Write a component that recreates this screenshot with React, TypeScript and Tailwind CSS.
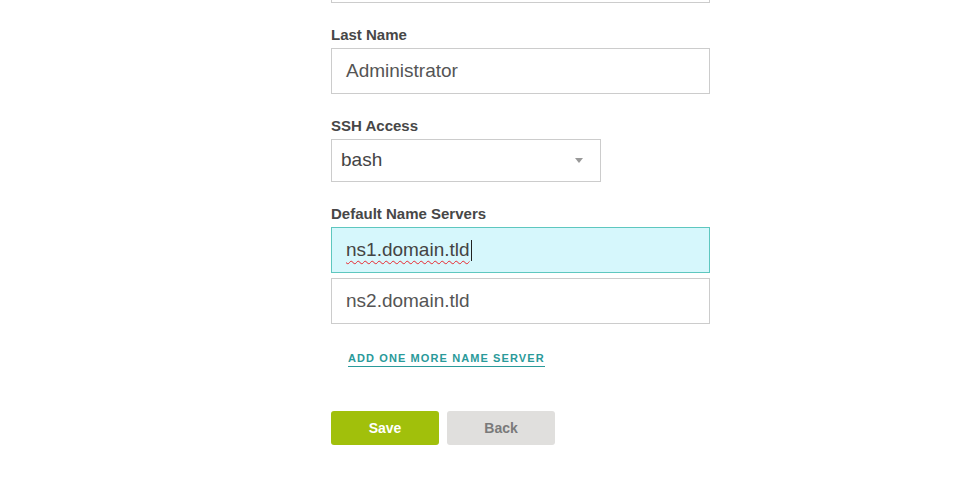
export default function App() {
  return (
    <main className="min-h-[493px] w-full overflow-hidden bg-white pl-[331px] font-['Liberation_Sans',Arial,sans-serif]">
      <div className="flex w-[379px] flex-col">
        <div className="-mt-[43px] h-[46px] border border-[#cccccc] bg-white" />

        <label className="mt-[24px] mb-[5px] text-[15px] leading-[16px] font-bold text-[#474747]">Last Name</label>
        <div className="flex h-[46px] items-center border border-[#cccccc] bg-white pl-[14px] text-[19px] text-[#555555]">
          Administrator
        </div>

        <label className="mt-[24px] mb-[5px] text-[15px] leading-[16px] font-bold text-[#474747]">SSH Access</label>
        <div className="flex h-[43px] w-[270px] items-center justify-between border border-[#cccccc] bg-white pr-[17px] pl-[9px] text-[19px] text-[#444444]">
          <span>bash</span>
          <span className="h-0 w-0 border-x-[4.5px] border-t-[5px] border-x-transparent border-t-[#999999]" />
        </div>

        <label className="mt-[24px] mb-[5px] text-[15px] leading-[16px] font-bold text-[#474747]">Default Name Servers</label>
        <div className="flex flex-col gap-[5px]">
          <div className="flex h-[46px] items-center border border-[#5ec7bf] bg-[#d6f7fc] pl-[14px] text-[19px] text-[#444444]">
            <span className="underline decoration-[#e8262e] decoration-wavy decoration-1 underline-offset-[4px]">ns1.domain.tld</span>
            <span className="ml-px h-[21px] w-px bg-[#222222]" />
          </div>
          <div className="flex h-[46px] items-center border border-[#cccccc] bg-white pl-[14px] text-[19px] text-[#555555]">
            ns2.domain.tld
          </div>
        </div>

        <div className="mt-[21px] pl-[17px]">
          <a className="inline-block border-b border-[#2a9a9a] pb-px text-[11px] leading-[14px] font-bold tracking-[1.1px] text-[#2a9a9a]">
            ADD ONE MORE NAME SERVER
          </a>
        </div>

        <div className="mt-[42px] flex gap-[8px]">
          <button className="h-[34px] w-[108px] rounded-[3px] bg-[#a1c00b] text-[14px] font-bold text-white">Save</button>
          <button className="h-[34px] w-[108px] rounded-[3px] bg-[#e0dfdd] text-[14px] font-bold text-[#7a7a7a]">Back</button>
        </div>
      </div>
    </main>
  );
}
